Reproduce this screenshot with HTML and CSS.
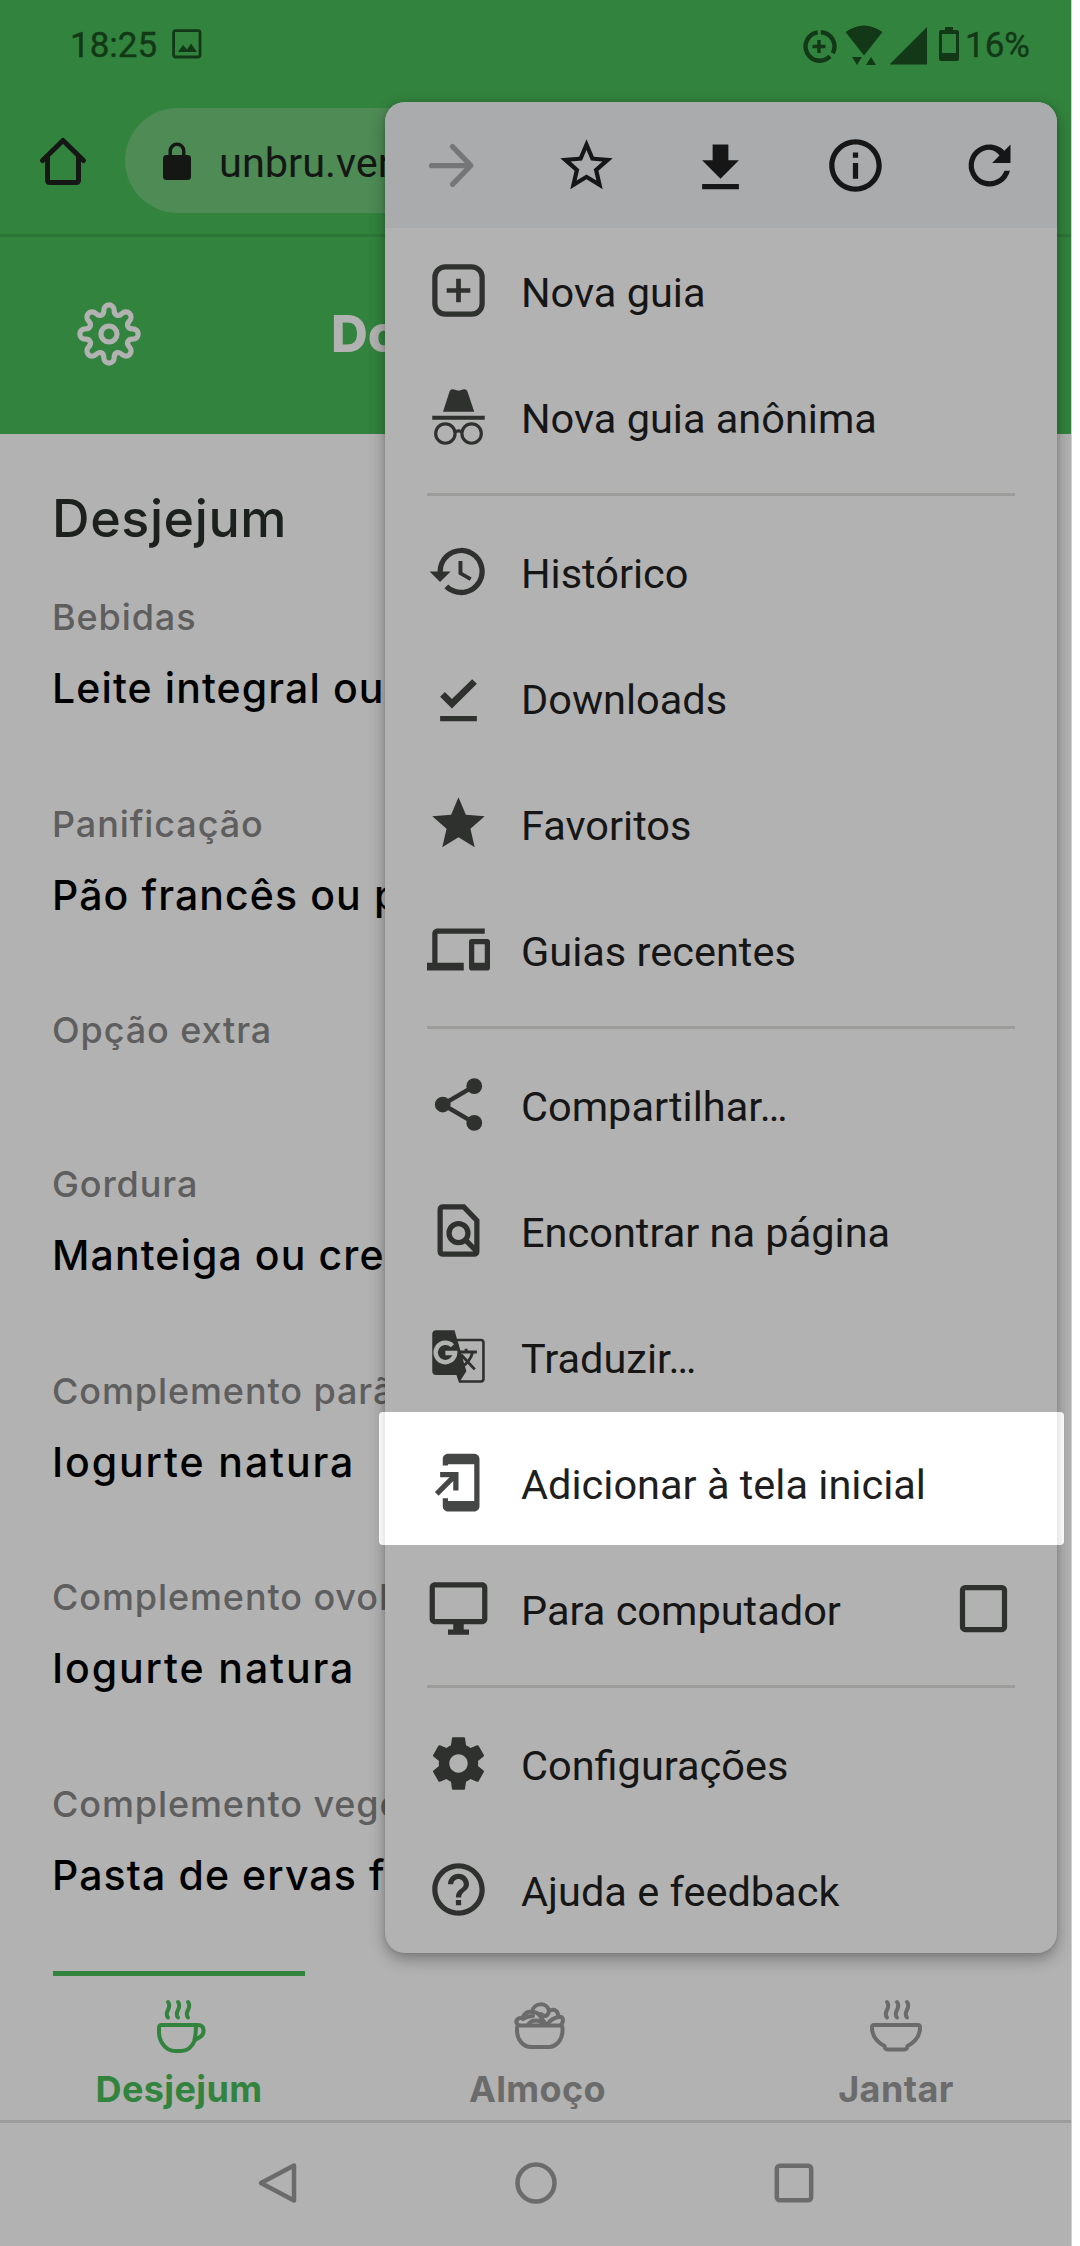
FILE: index.html
```html
<!DOCTYPE html>
<html lang="pt-BR">
<head>
<meta charset="utf-8">
<title>Cardápio</title>
<link rel="stylesheet" href="styles.css">
</head>
<body>
<div class="screen">
  <div class="status">
    <span class="status-text">18:25</span>
    <svg class="status-picture" width="30" height="30" viewBox="0 0 30 30"><rect x="1.6" y="1.6" width="26.4" height="26.4" rx="2" fill="none" stroke="currentColor" stroke-width="2.8"/><path d="M6 23l5-7 4 4.500 4-6 6 8.500z" fill="currentColor"/></svg>
    <svg class="status-icons" width="146" height="40" viewBox="0 0 146 40">
      <g fill="none" stroke="currentColor" stroke-width="4.400"><path d="M18.800 8.300A14.200 14.200 0 0 1 30.800 29.200M28 32.300A14.200 14.200 0 1 1 15.700 8.400"/><path d="M17 16v13M10.500 22.500h13" stroke-width="3.400"/></g>
      <path fill="currentColor" d="M43.500 8Q62-5 80.500 8L62 31.500zM50 33h10l-5 8zM64 41l5-8 5 8zM88 40.500V40L125 3v37.500z"/>
    </svg>
    <svg class="status-battery" width="20" height="34" viewBox="0 0 20 34"><path fill="currentColor" fill-rule="evenodd" d="M6 0h8v3h4q2 0 2 2v27q0 2-2 2H2q-2 0-2-2V5q0-2 2-2h4zM3 7v19h14V7z"/></svg>
    <span class="status-text">16%</span>
  </div>

  <div class="toolbar">
    <svg class="home" width="50" height="50" viewBox="0 0 50 50" fill="none" stroke="currentColor" stroke-width="5" stroke-linecap="round" stroke-linejoin="round"><path d="M4.500 24.500L25 4.500l20.500 20M9.500 21v23q0 2.500 2.500 2.500h26q2.500 0 2.500-2.500V21"/></svg>
    <div class="url">
      <svg width="28" height="38" viewBox="0 0 28 38"><rect y="13" width="28" height="25" rx="3.500" fill="currentColor"/><path d="M7.200 14V9a6.800 6.800 0 0 1 13.600 0v5" fill="none" stroke="currentColor" stroke-width="3.400"/></svg>
      <span>unbru.vercel.app</span>
    </div>
  </div>

  <header class="header">
    <svg class="header-gear" width="66" height="66" viewBox="-33 -33 66 66" fill="none" stroke="currentColor" stroke-width="5.200" stroke-linejoin="round"><path d="M-5.200-23.500C-5.200-31 5.200-31 5.200-23.500C5.200-18.500 9.500-17 12.900-20.300C18.300-25.400 25.400-18.300 20.300-12.900C17-9.500 18.500-5.200 23.500-5.200C31-5.200 31 5.200 23.500 5.200C18.500 5.200 17 9.500 20.300 12.900C25.400 18.300 18.300 25.400 12.900 20.300C9.500 17 5.200 18.500 5.200 23.500C5.200 31-5.200 31-5.200 23.500C-5.200 18.500-9.500 17-12.900 20.300C-18.300 25.400-25.400 18.300-20.300 12.900C-17 9.500-18.500 5.200-23.500 5.200C-31 5.200-31-5.200-23.500-5.200C-18.500-5.200-17-9.500-20.300-12.900C-25.400-18.300-18.300-25.400-12.900-20.300C-9.500-17-5.200-18.500-5.200-23.500Z"/><circle r="8"/></svg>
    <span class="header-title">Domingo</span>
  </header>

  <main class="meals">
    <h1 class="meal-title">Desjejum</h1>
    <section class="group"><h2>Bebidas</h2><p>Leite integral ou</p></section>
    <section class="group"><h2>Panificação</h2><p>Pão francês ou pão</p></section>
    <section class="group group-empty"><h2>Opção extra</h2></section>
    <section class="group"><h2>Gordura</h2><p>Manteiga ou creme</p></section>
    <section class="group"><h2>Complemento parão</h2><p class="loose">Iogurte natura</p></section>
    <section class="group"><h2>Complemento ovolo</h2><p class="loose">Iogurte natura</p></section>
    <section class="group"><h2>Complemento vege</h2><p>Pasta de ervas f</p></section>
  </main>

  <nav class="tabs">
    <div class="tab tab-active">
      <svg width="66" height="66" viewBox="0 0 66 66"><path d="M22 9c5 6-5 10 0 15.500M32 9c5 6-5 10 0 15.500M42 9c5 6-5 10 0 15.500"/><path d="M16 32h36c7 0 7 9 2 12q-2.500 1.500-5 3C46 54 41 58 35 58h-6C20 58 13 49 13 39v-4q0-3 3-3zM50 32.500q0 8-1.500 14"/></svg>
      <span>Desjejum</span>
    </div>
    <div class="tab">
      <svg width="66" height="66" viewBox="0 0 66 66"><path d="M14 32.500h41q2.500 0 2.500 3v2c0 9-6 16.500-14 16.500H26c-8 0-14-7.500-14-16.500v-2q0-3 2-3z"/><path d="M13 32c-4-4 0-8 5-7 1-5 5-7 9-6 1-9 15-11 17-1 5-3 10 0 9 6 6-1 6 4 3 8M18 26q4-3 10-3M23 32c3-6 13-6 15 0M27 19q6 0 8 4 2 3 5 7M44 18q-1 5-4 5-2 0-4-2M42 32q4-7 12-8"/></svg>
      <span>Almoço</span>
    </div>
    <div class="tab">
      <svg width="66" height="66" viewBox="0 0 66 66"><path d="M24 9c5 6-5 10 0 15.500M34 9c5 6-5 10 0 15.500M44 9c5 6-5 10 0 15.500"/><path d="M11 32h44q2 0 2 2.500c0 9-6 15-12.500 18.500-.5 3-1 3.500-3 3.500h-17c-2 0-2.500-.5-3-3.500C15 49.500 9 43.500 9 34.500Q9 32 11 32z"/></svg>
      <span>Jantar</span>
    </div>
  </nav>

  <div class="softkeys">
    <svg width="42" height="42" viewBox="0 0 42 42"><path d="M37 3.500v35L4 21z"/></svg>
    <svg width="42" height="42" viewBox="0 0 42 42"><circle cx="21" cy="21" r="18.500"/></svg>
    <svg width="42" height="42" viewBox="0 0 42 42"><rect x="3.800" y="3.800" width="34.400" height="34.400" rx="3"/></svg>
  </div>

  <div class="menu">
    <div class="menu-bar">
      <svg class="ico faded" viewBox="0 0 24 24"><path d="M4 12h14.500M12 4.800l7 7.200-7 7.200" fill="none" stroke="currentColor" stroke-width="2" stroke-linecap="round" stroke-linejoin="round"/></svg>
      <svg class="ico" viewBox="0 0 24 24"><path d="M22 9.240l-7.190-.62L12 2 9.190 8.630 2 9.240l5.460 4.730L5.820 21 12 17.270 18.180 21l-1.630-7.030L22 9.240zM12 15.400l-3.760 2.270 1-4.280-3.320-2.880 4.380-.38L12 6.100l1.710 4.040 4.380.38-3.320 2.880 1 4.280L12 15.400z"/></svg>
      <svg class="ico" viewBox="0 0 24 24"><path d="M19 10h-4V4H9v6H5l7 7 7-7zM5 19v2h14v-2H5z"/></svg>
      <svg class="ico" viewBox="0 0 24 24"><path d="M11 7h2v2h-2zm0 4h2v6h-2zm1-9C6.480 2 2 6.480 2 12s4.480 10 10 10 10-4.480 10-10S17.520 2 12 2zm0 18c-4.410 0-8-3.590-8-8s3.590-8 8-8 8 3.590 8 8-3.590 8-8 8z"/></svg>
      <svg class="ico" viewBox="0 0 24 24"><path d="M20 4v7h-7l2.800-2.800A5.400 5.400 0 0 0 12 6a6 6 0 1 0 5.700 8h2.100A8 8 0 1 1 12 4c2.200 0 4.200.9 5.650 2.350z"/></svg>
    </div>
    <div class="row"><svg class="ico" viewBox="0 0 24 24"><rect x="3" y="3" width="18" height="18" rx="4" fill="none" stroke="currentColor" stroke-width="2"/><path d="M11.100 7.500h1.800v3.600h3.600v1.800h-3.600v3.600h-1.800v-3.600H7.500v-1.800h3.600z"/></svg><span>Nova guia</span></div>
    <div class="row"><svg class="ico" viewBox="0 0 24 24"><path d="M8.500 2.800Q8.900 1 11 1.900q1 .4 2 0 2.100-.9 2.500.9L18 10.200H6.100zM2 11.700h20v1.500H2z"/><g fill="none" stroke="currentColor" stroke-width="1.200"><circle cx="7" cy="18.500" r="3.700"/><circle cx="17" cy="18.500" r="3.700"/><path d="M10.500 18q1.500-1 3 0"/></g></svg><span>Nova guia anônima</span></div>
    <hr>
    <div class="row"><svg class="ico" viewBox="0 0 24 24"><path d="M13 3a9 9 0 0 0-9 9H1l3.890 3.890.07.140L9 12H6a7 7 0 1 1 2.060 4.940l-1.420 1.420A9 9 0 1 0 13 3zm-1 5v5l4.280 2.540.72-1.210-3.500-2.080V8H12z"/></svg><span>Histórico</span></div>
    <div class="row"><svg class="ico" viewBox="0 0 24 24"><path d="M5 19h14v2H5zM17.200 5l1.800 1.800-9.500 9.400L5 11.700l1.800-1.800 2.700 2.700z"/></svg><span>Downloads</span></div>
    <div class="row"><svg class="ico" viewBox="0 0 24 24"><path d="M12 17.270L18.180 21l-1.640-7.030L22 9.240l-7.190-.61L12 2 9.190 8.630 2 9.240l5.460 4.730L5.820 21z"/></svg><span>Favoritos</span></div>
    <div class="row"><svg class="ico" viewBox="0 0 24 24"><path d="M4 6h18V4H4c-1.100 0-2 .9-2 2v11H0v3h14v-3H4V6zm19 2h-6c-.55 0-1 .45-1 1v10c0 .55.450 1 1 1h6c.55 0 1-.45 1-1V9c0-.55-.45-1-1-1zm-1 9h-4v-7h4v7z"/></svg><span>Guias recentes</span></div>
    <hr>
    <div class="row"><svg class="ico" viewBox="0 0 24 24"><circle cx="18" cy="5" r="3"/><circle cx="6" cy="12" r="3"/><circle cx="18" cy="19" r="3"/><path d="M18 5L6 12l12 7" fill="none" stroke="currentColor" stroke-width="1.700"/></svg><span>Compartilhar…</span></div>
    <div class="row"><svg class="ico" viewBox="0 0 24 24"><path d="M14 3H6.200q-1.200 0-1.200 1.200v15.600Q5 21 6.200 21h11.600q1.200 0 1.200-1.200V8.200zM14.500 15.500L19 20" fill="none" stroke="currentColor" stroke-width="2"/><circle cx="12" cy="13" r="3.600" fill="none" stroke="currentColor" stroke-width="2"/></svg><span>Encontrar na página</span></div>
    <div class="row"><svg class="ico" viewBox="0 0 24 24"><path d="M3.500 2h7l.9 3.200h9.100Q22 5.200 22 6.700v13.800q0 1.500-1.500 1.500h-8.300l-1-3H3.500Q2 19 2 17.500v-14Q2 2 3.500 2zM11.700 6.200L15 17.600 12.800 21h7.700q.5 0 .5-.5V6.700q0-.5-.5-.5z" fill-rule="evenodd"/><path d="M12.500 10.300h6.500M14.900 9v1.300M13 11.300l5.200 5.600M17.400 10.300q-.8 3.500-4.400 6" fill="none" stroke="currentColor" stroke-width="1.100"/><path class="knockout" d="M9.700 7.900A3.700 3.700 0 1 0 10.700 10.700H7" fill="none" stroke-width="1.700"/></svg><span>Traduzir…</span></div>
    <div class="row row-spot"><svg class="ico" viewBox="0 0 24 24"><path d="M18 1.010L8 1c-1.100 0-2 .9-2 2v2.500h2V5h10v14H8v-1H6v3c0 1.100.9 2 2 2h10c1.100 0 2-.9 2-2V3c0-1.100-.9-1.990-2-1.990zM10 15h2V8H5v2h3.590L3 15.590 4.410 17 10 11.410z"/></svg><span>Adicionar à tela inicial</span></div>
    <div class="row"><svg class="ico" viewBox="0 0 24 24"><path d="M21 2H3c-1.100 0-2 .9-2 2v12c0 1.100.9 2 2 2h7v2H8v2h8v-2h-2v-2h7c1.100 0 2-.9 2-2V4c0-1.100-.9-2-2-2zm0 14H3V4h18v12z"/></svg><span>Para computador</span><svg class="ico check" viewBox="0 0 24 24"><rect x="4" y="4" width="16" height="16" rx="1" fill="none" stroke="currentColor" stroke-width="2"/></svg></div>
    <hr>
    <div class="row"><svg class="ico" viewBox="0 0 24 24"><path d="M19.430 12.980c.04-.32.070-.64.070-.98s-.03-.66-.07-.98l2.110-1.650c.19-.15.240-.42.120-.64l-2-3.460c-.12-.22-.39-.3-.61-.22l-2.490 1c-.52-.4-1.080-.73-1.690-.98l-.38-2.650C14.460 2.180 14.250 2 14 2h-4c-.25 0-.46.180-.49.420l-.38 2.650c-.61.250-1.170.590-1.690.98l-2.490-1c-.23-.09-.49 0-.61.220l-2 3.460c-.13.220-.07.490.120.640l2.110 1.650c-.04.320-.07.650-.07.980s.03.660.07.980l-2.110 1.650c-.19.150-.24.420-.12.640l2 3.460c.12.220.39.300.61.220l2.490-1c.52.400 1.080.730 1.690.98l.38 2.650c.03.240.24.420.49.420h4c.25 0 .46-.18.490-.42l.38-2.650c.61-.25 1.170-.59 1.690-.98l2.490 1c.23.090.49 0 .61-.22l2-3.460c.12-.22.070-.49-.12-.64l-2.110-1.650zM12 15.500c-1.930 0-3.500-1.570-3.500-3.500s1.570-3.500 3.500-3.500 3.500 1.570 3.500 3.500-1.570 3.500-3.500 3.500z"/></svg><span>Configurações</span></div>
    <div class="row"><svg class="ico" viewBox="0 0 24 24"><path d="M11 18h2v-2h-2v2zm1-16C6.480 2 2 6.480 2 12s4.480 10 10 10 10-4.480 10-10S17.520 2 12 2zm0 18c-4.410 0-8-3.590-8-8s3.590-8 8-8 8 3.590 8 8-3.590 8-8 8zm0-14c-2.210 0-4 1.790-4 4h2c0-1.100.9-2 2-2s2 .9 2 2c0 2-3 1.750-3 5h2c0-2.250 3-2.500 3-5 0-2.210-1.790-4-4-4z"/></svg><span>Ajuda e feedback</span></div>
  </div>
</div>
</body>
</html>
```
FILE: styles.css
```css
* { box-sizing: border-box; }
body { margin: 0; background: #fff; font-family: Inter, sans-serif; }
svg { display: block; flex: none; overflow: visible; }

.screen {
  position: relative;
  display: flex;
  flex-direction: column;
  width: 1072px;
  height: 2246px;
  overflow: hidden;
  background: #b2b2b2;
  border-right: 1px solid #cfcfcf;
}

.status {
  display: flex;
  align-items: center;
  height: 87px;
  padding: 0 41px 0 70px;
  background: #32833d;
  color: #133818;
  font: 400 35px/40px Roboto, sans-serif;
  -webkit-text-stroke: .4px currentColor;
}
.status-text { padding-top: 4px; }
.status-picture { margin-left: 15px; }
.status-icons { margin-left: auto; }
.status-battery { margin: 0 6px 0 -9px; }

.toolbar {
  display: flex;
  align-items: center;
  gap: 37px;
  height: 150px;
  padding-left: 38px;
  background: #32833d;
  border-bottom: 3px solid #2d7637;
  color: #151715;
}
.url {
  display: flex;
  flex: 1;
  align-items: center;
  gap: 28px;
  height: 105px;
  margin-right: 80px;
  padding-left: 38px;
  border-radius: 53px;
  background: #4e8b55;
  font: 41.5px/50px Roboto, sans-serif;
}
.url span { padding-top: 5px; }

.header {
  display: flex;
  align-items: center;
  gap: 189px;
  height: 197px;
  padding-left: 76px;
  padding-bottom: 4px;
  background: #32833d;
  color: #b2b2b2;
}
.header-title { font-size: 51px; font-weight: 800; }

.meals { flex: 1; padding: 55px 0 0 52px; white-space: nowrap; overflow: hidden; }
.meal-title {
  margin: 0 0 46px;
  font-size: 52px;
  font-weight: 450;
  line-height: 60px;
  color: #1c211d;
  letter-spacing: .6px;
}
.group { height: 206.7px; }
.group-empty { height: 153.7px; }
.group h2 { margin: 0 0 24px; font-size: 36px; font-weight: 450; line-height: 44px; color: #5e5e5e; letter-spacing: .9px; }
.group p { margin: 0; font-size: 41px; font-weight: 450; line-height: 50px; color: #000; letter-spacing: 1.1px; }
.group .loose { letter-spacing: 1.9px; }

.tabs { display: flex; justify-content: space-between; height: 149px; padding: 0 49px 0 53px; }
.tab {
  display: flex;
  flex-direction: column;
  align-items: center;
  width: 252px;
  padding-top: 17px;
  border-top: 5px solid transparent;
  color: #6b6b6b;
  font-size: 36px;
  font-weight: 700;
  line-height: 44px;
  letter-spacing: .4px;
}
.tab-active { border-top-color: #32833d; color: #32833d; }
.tab svg { fill: none; stroke: currentColor; stroke-width: 4; stroke-linecap: round; stroke-linejoin: round; }
.tab span { margin-top: 8px; }

.softkeys {
  display: flex;
  align-items: center;
  gap: 216px;
  height: 126px;
  padding: 0 0 3px 257px;
  border-top: 3px solid #9c9c9c;
}
.softkeys svg { fill: none; stroke: #6b6b6b; stroke-width: 4.5; stroke-linejoin: round; }

.menu {
  position: absolute;
  z-index: 1;
  left: 385px;
  top: 102px;
  width: 672px;
  height: 1851px;
  border-radius: 20px;
  background: #b2b2b2;
  box-shadow: 0 6px 16px rgba(0, 0, 0, .32), 0 0 4px rgba(0, 0, 0, .12);
  color: #161616;
  font: 41.5px/50px Roboto, sans-serif;
}
.menu-bar {
  display: flex;
  align-items: center;
  justify-content: space-around;
  height: 126px;
  border-radius: 20px 20px 0 0;
  background: #a9abad;
}
.ico { width: 63px; height: 63px; fill: currentColor; }
.faded { color: #747678; }
.row { position: relative; display: flex; align-items: center; gap: 31.5px; height: 126px; padding-left: 41.5px; }
.row .ico { margin-bottom: 2px; color: #2f312f; }
.row span { position: relative; padding-top: 3px; }
.row .check { margin-left: auto; margin-right: 42px; }
.knockout { stroke: #b2b2b2; }
.menu hr { height: 3px; margin: 13px 42px; border: 0; background: #9c9c9b; }

.row-spot { color: #1f1f1f; }
.row-spot .ico { position: relative; color: #454746; }
.row-spot::before {
  content: "";
  position: absolute;
  left: -6px;
  right: -7px;
  top: -8px;
  bottom: 1px;
  border-radius: 4px;
  background: linear-gradient(90deg, #fafafa 0, #e8e8e8 6px, #fff 6px, #fff calc(100% - 7px), #e8e8e8 calc(100% - 7px), #fafafa 100%);
}
```
